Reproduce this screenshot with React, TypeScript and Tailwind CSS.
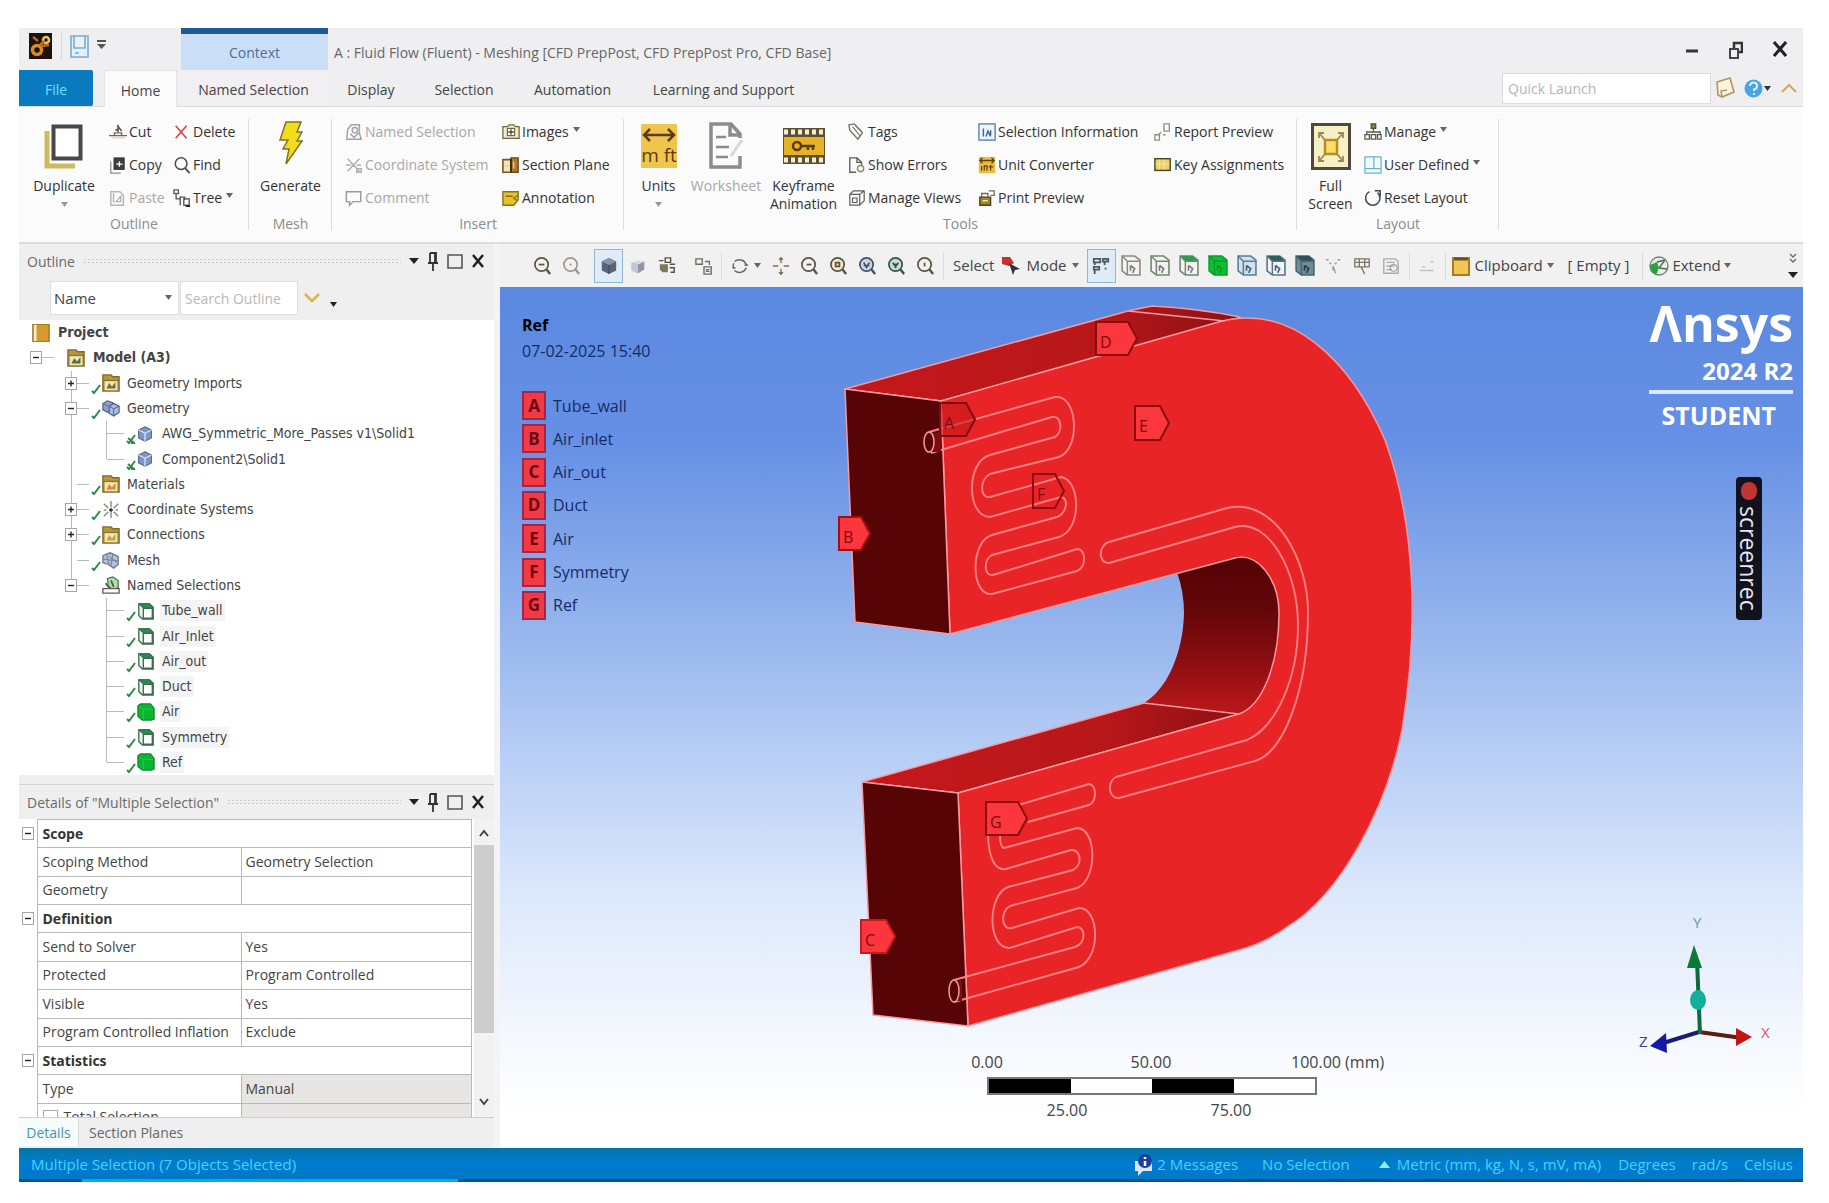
import React from "react";

type Kids = { children?: React.ReactNode };

function Ico({ size = 18, box = 20, children }: Kids & { size?: number; box?: number }) {
  return (
    <svg width={size} height={size} viewBox={`0 0 ${box} ${box}`} fill="none" className="shrink-0" aria-hidden="true">
      {children}
    </svg>
  );
}

/* ---------- ribbon icons ---------- */
const CutI = () => (
  <Ico>
    <path d="M0 14h20M6 14v-3h8v3" stroke="#6f6a5c" strokeWidth="1.6" />
    <path d="M10 2v8M10 4l4 5M7 8l3-1" stroke="#5d574b" strokeWidth="1.8" />
    <path d="M3 16.5h15" stroke="#d8cf9c" strokeWidth="1.2" />
  </Ico>
);
const CopyI = () => (
  <Ico>
    <path d="M2 6v13h11" stroke="#8f8f8f" strokeWidth="1.4" />
    <rect x="5" y="1.5" width="12.5" height="14" fill="#3c3c3c" />
    <path d="M8 9h7M11.500 6v6" stroke="#fff" strokeWidth="1.600" />
  </Ico>
);
const PasteI = () => (
  <Ico>
    <path d="M2 3h10l4 4v11H2z" stroke="#b5b5b5" strokeWidth="1.600" />
    <path d="M5 5v10M8 14l5-6v6z" stroke="#b5b5b5" strokeWidth="1.600" />
  </Ico>
);
const DeleteI = () => (
  <Ico>
    <path d="M3 3l12 14M15 3L3 17" stroke="#d6454a" strokeWidth="1.800" />
  </Ico>
);
const FindI = () => (
  <Ico>
    <circle cx="9" cy="8.500" r="6.500" stroke="#4b4b4b" strokeWidth="1.700" />
    <path d="M13.500 13.500l5 5.500" stroke="#4b4b4b" strokeWidth="2" />
  </Ico>
);
const TreeI = () => (
  <Ico>
    <rect x="1" y="1" width="5" height="4" stroke="#555" strokeWidth="1.400" />
    <path d="M3.500 5v6h4M8 8v10M8 9h5v3" stroke="#555" strokeWidth="1.500" />
    <rect x="12" y="11" width="6" height="7" stroke="#555" strokeWidth="1.500" />
    <path d="M14 19h5" stroke="#222" strokeWidth="2" />
  </Ico>
);
const NamedI = () => (
  <Ico>
    <path d="M3 7l4-5h9v9l2 7H2zM6 12l4 4 5-5" stroke="#a2a2a2" strokeWidth="1.600" />
    <circle cx="11" cy="8" r="3" stroke="#a2a2a2" strokeWidth="1.600" />
  </Ico>
);
const CoordI = () => (
  <Ico>
    <path d="M3 3l13 14M16 3L3 17M1 10h6M13 10h5M13 14h5v4h-5z" stroke="#b0b0b0" strokeWidth="1.600" />
  </Ico>
);
const CommentI = () => (
  <Ico>
    <path d="M1.500 3h16v11H9l-4 4v-4H1.500z" stroke="#9a9a9a" strokeWidth="1.600" />
  </Ico>
);
const ImagesI = () => (
  <Ico>
    <path d="M1 4h5l2-2h5l2 2h4v13H1z" fill="#f2ecc6" stroke="#6e6640" strokeWidth="1.400" />
    <rect x="6" y="6" width="8" height="8" fill="#fff" stroke="#6e6640" strokeWidth="1.300" />
    <path d="M10 7v6M7 10h6" stroke="#444" strokeWidth="1.500" />
  </Ico>
);
const SectionI = () => (
  <Ico>
    <path d="M1 4h9v14H1z" fill="#f6e3b8" stroke="#7a5a24" strokeWidth="1.800" />
    <path d="M10 2h8v16h-8z" fill="#a97b2c" stroke="#6b4f1e" strokeWidth="1.500" />
    <path d="M10 3v15" stroke="#3c2c10" strokeWidth="2" />
    <path d="M13 6v8M4 11h4" stroke="#e9cf8e" strokeWidth="1.500" />
  </Ico>
);
const AnnotI = () => (
  <Ico>
    <path d="M1 3h17v9l-5 6H1z" fill="#e6c22c" stroke="#8c7212" strokeWidth="1.500" />
    <path d="M4 8h8M18 7l-5 3 4 3" stroke="#8c7212" strokeWidth="1.500" />
  </Ico>
);
const TagsI = () => (
  <Ico>
    <path d="M1 2l6-1 9 10-5 7-9-10z" stroke="#75705f" strokeWidth="1.500" />
    <path d="M5 4l9 11M8 3l7 6" stroke="#75705f" strokeWidth="1.200" />
  </Ico>
);
const ErrorsI = () => (
  <Ico>
    <path d="M9 18H2V2h8l5 5v3M10 2v5h5" stroke="#5c5c5c" strokeWidth="1.500" />
    <circle cx="14" cy="14" r="3.500" stroke="#8a8a5c" strokeWidth="1.500" />
  </Ico>
);
const ViewsI = () => (
  <Ico>
    <path d="M2 6h11v12H2zM2 6l4-4h12v11l-5 5M13 6l5-4M5 10h5v5H5z" stroke="#5c5c5c" strokeWidth="1.300" />
  </Ico>
);
const SelInfoI = () => (
  <Ico>
    <rect x="1" y="1" width="18" height="18" fill="#eef4fa" stroke="#5c87b4" strokeWidth="1.600" />
    <path d="M6 6v9M9 15l2-6 3 6M14 8v6" stroke="#38659a" strokeWidth="1.600" />
  </Ico>
);
const UnitConvI = () => (
  <Ico>
    <rect x="1" y="1" width="18" height="18" fill="#eebb3c" />
    <path d="M2 5h16M5 2L2 5l3 3M15 2l3 3-3 3M4 16v-5M7 16v-5h3v5M14 16v-6M12 12h5" stroke="#5e430c" strokeWidth="1.400" />
  </Ico>
);
const PrintI = () => (
  <Ico>
    <path d="M2 9h12v9H2z" fill="#9c8430" stroke="#4e4116" strokeWidth="1.500" />
    <path d="M4 9V5h7v4M12 2h6v5h-4" stroke="#7a6d3c" strokeWidth="1.400" />
    <path d="M5 13h6" stroke="#f3e7b0" strokeWidth="1.600" />
  </Ico>
);
const ReportI = () => (
  <Ico>
    <path d="M11 1h6v8h-6zM1 13h5v6H1zM8 10l-3 3M10 13h3" stroke="#97907c" strokeWidth="1.500" />
  </Ico>
);
const KeyI = () => (
  <Ico>
    <rect x="1" y="3" width="17" height="13" fill="#ecd06a" stroke="#4e4423" strokeWidth="1.600" />
    <path d="M6 4v11M11 4v11M2 9h15" stroke="#f7e9ae" />
  </Ico>
);
const ManageI = () => (
  <Ico>
    <path d="M8 1h5v5H8z" fill="#6f8f3e" stroke="#4a4a3a" strokeWidth="1.400" />
    <path d="M10.500 6v4M3 13v-3h15v3M1 13h5v5H1zM8 13h5v5H8zM15 13h4v5h-4z" stroke="#5a564a" strokeWidth="1.400" />
  </Ico>
);
const UserDefI = () => (
  <Ico>
    <path d="M1 1h18v18H1zM1 14h18M11 1v13" fill="#eff8fc" stroke="#6fb2d0" strokeWidth="1.400" />
  </Ico>
);
const ResetI = () => (
  <Ico>
    <path d="M6 3a8 8 0 1 0 9 1M12 2h6v6" stroke="#4b4b4b" strokeWidth="1.700" />
  </Ico>
);

/* ---------- ribbon parts ---------- */
function Caret({ tone = "text-[#666]" }: { tone?: string }) {
  return (
    <svg width="7" height="5" viewBox="0 0 7 5" className={`shrink-0 ${tone}`} aria-hidden="true">
      <path d="M0 0h7L3.500 5z" fill="currentColor" />
    </svg>
  );
}

function Small({ icon, label, off, menu }: { icon: React.ReactNode; label: string; off?: boolean; menu?: boolean }) {
  return (
    <button disabled={off} className={`flex h-[33px] items-center gap-[2px] whitespace-nowrap ${off ? "text-[#a8a8a8]" : "text-[#333]"}`}>
      {icon}
      <span>{label}</span>
      {menu && <span className="mb-1 ml-[2px]"><Caret /></span>}
    </button>
  );
}

function Big({ icon, label, w, off, menu }: { icon: React.ReactNode; label: string[]; w: string; off?: boolean; menu?: boolean }) {
  return (
    <button disabled={off} className={`flex shrink-0 flex-col items-center ${w} ${off ? "text-[#a8a8a8]" : "text-[#333]"}`}>
      <span className="flex h-[62px] items-center">{icon}</span>
      {label.map((l) => (
        <span key={l} className="whitespace-nowrap leading-[18px]">{l}</span>
      ))}
      {menu && <span className="flex h-[18px] items-center"><Caret tone="text-[#999]" /></span>}
    </button>
  );
}

const Col = ({ w, children }: Kids & { w: string }) => <div className={`flex shrink-0 flex-col items-start ${w}`}>{children}</div>;

function Group({ label, pad = "", children }: Kids & { label: string; pad?: string }) {
  return (
    <section className="relative flex flex-col after:absolute after:bottom-3 after:right-0 after:top-3 after:w-px after:bg-[#dcdcdc]">
      <div className={`flex h-[109px] pt-[8px] ${pad}`}>{children}</div>
      <div className="text-center leading-[16px] text-[#8c8c8c]">{label}</div>
    </section>
  );
}

function Ribbon() {
  return (
    <div className="flex h-[137px] shrink-0 overflow-hidden border-b-2 border-[#dcdcdf] bg-[#fbfbfb]">
      <Group label="Outline">
        <Big w="w-[90px]" menu label={["Duplicate"]} icon={
          <svg width="40" height="46" viewBox="0 0 40 46" fill="none">
            <path d="M3 8v35h28" stroke="#cdbb5e" strokeWidth="5" />
            <rect x="9.500" y="3.500" width="27" height="32" fill="#fff" stroke="#4b4648" strokeWidth="4" />
          </svg>} />
        <Col w="w-[64px]">
          <Small icon={<CutI />} label="Cut" />
          <Small icon={<CopyI />} label="Copy" />
          <Small icon={<PasteI />} label="Paste" off />
        </Col>
        <Col w="w-[76px]">
          <Small icon={<DeleteI />} label="Delete" />
          <Small icon={<FindI />} label="Find" />
          <Small icon={<TreeI />} label="Tree" menu />
        </Col>
      </Group>
      <Group label="Mesh">
        <Big w="w-[83px]" label={["Generate"]} icon={
          <svg width="26" height="50" viewBox="0 0 26 50">
            <path d="M8 1h15l-4 10h5l-5 9h5L8 43l3-15H5l5-9H2z" fill="#f3dc1c" stroke="#7d7326" strokeWidth="1.500" />
          </svg>} />
      </Group>
      <Group label="Insert" pad="pl-[13px]">
        <Col w="w-[157px]">
          <Small icon={<NamedI />} label="Named Selection" off />
          <Small icon={<CoordI />} label="Coordinate System" off />
          <Small icon={<CommentI />} label="Comment" off />
        </Col>
        <Col w="w-[122px]">
          <Small icon={<ImagesI />} label="Images" menu />
          <Small icon={<SectionI />} label="Section Plane" />
          <Small icon={<AnnotI />} label="Annotation" />
        </Col>
      </Group>
      <Group label="Tools">
        <Big w="w-[69px]" menu label={["Units"]} icon={
          <svg width="36" height="44" viewBox="0 0 36 44">
            <rect width="36" height="44" rx="1" fill="#efc54c" />
            <path d="M3 11h30M9 5l-6 6 6 6M27 5l6 6-6 6" stroke="#5a3c12" strokeWidth="2.500" fill="none" />
            <text x="18" y="38" textAnchor="middle" fontSize="19" fill="#5a3c12">m ft</text>
          </svg>} />
        <Big w="w-[66px]" off label={["Worksheet"]} icon={
          <svg width="34" height="48" viewBox="0 0 34 48" fill="none">
            <path d="M31 34v11H2V2h20l9 10v4M21 3v10h10" stroke="#8c8c8c" strokeWidth="3.500" />
            <path d="M7 15h10M7 25h13M7 35h12" stroke="#8c8c8c" strokeWidth="2.500" />
            <path d="M33 18L22 34" stroke="#d8d8d8" strokeWidth="3" />
          </svg>} />
        <Big w="w-[89px]" label={["Keyframe", "Animation"]} icon={
          <svg width="42" height="36" viewBox="0 0 42 36">
            <rect width="42" height="36" fill="#5c5034" />
            <path d="M1 4h40M1 32h40" stroke="#f4eecb" strokeWidth="5" strokeDasharray="4 3" />
            <rect x="1" y="9" width="40" height="18" fill="#e7b325" />
            <circle cx="14" cy="18" r="4" fill="none" stroke="#5a3c12" strokeWidth="2.500" />
            <path d="M18 18h14M25 18v4M30 18v4" stroke="#5a3c12" strokeWidth="2.500" />
          </svg>} />
        <Col w="w-[130px]">
          <Small icon={<TagsI />} label="Tags" />
          <Small icon={<ErrorsI />} label="Show Errors" />
          <Small icon={<ViewsI />} label="Manage Views" />
        </Col>
        <Col w="w-[176px]">
          <Small icon={<SelInfoI />} label="Selection Information" />
          <Small icon={<UnitConvI />} label="Unit Converter" />
          <Small icon={<PrintI />} label="Print Preview" />
        </Col>
        <Col w="w-[143px]">
          <Small icon={<ReportI />} label="Report Preview" />
          <Small icon={<KeyI />} label="Key Assignments" />
        </Col>
      </Group>
      <Group label="Layout">
        <Big w="w-[67px]" label={["Full", "Screen"]} icon={
          <svg width="40" height="47" viewBox="0 0 40 47" fill="none">
            <rect x="1.500" y="1.500" width="37" height="44" fill="#f8efc4" stroke="#4c4a3c" strokeWidth="3" />
            <rect x="14" y="17" width="12" height="14" fill="#fbdf6a" stroke="#b48f1e" strokeWidth="2.500" />
            <path d="M14 17l-6-7M26 17l6-7M14 31l-6 7M26 31l6 7M8 15v-5h5M32 15v-5h-5M8 33v5h5M32 33v5h-5" stroke="#9a875a" strokeWidth="1.800" />
          </svg>} />
        <Col w="w-[135px]">
          <Small icon={<ManageI />} label="Manage" menu />
          <Small icon={<UserDefI />} label="User Defined" menu />
          <Small icon={<ResetI />} label="Reset Layout" />
        </Col>
      </Group>
    </div>
  );
}

function TitleBar() {
  return (
    <div className="flex h-[42px] shrink-0 items-start bg-[#efeff1]">
      <div className="flex w-[162px] items-center pl-[10px] pt-[4px]">
        <svg width="23" height="26" viewBox="0 0 23 26">
          <rect width="23" height="26" fill="#1d130c" />
          <circle cx="8" cy="17" r="4.500" fill="none" stroke="#d98b25" strokeWidth="3.500" />
          <circle cx="17" cy="7" r="3" fill="none" stroke="#f0c25a" strokeWidth="2.500" />
          <path d="M12 13l8-1M11 12l4-4M4 4l5 4" stroke="#b86a1b" strokeWidth="2.500" />
        </svg>
        <span className="ml-[9px] h-[28px] w-px bg-[#dadadc]" />
        <button aria-label="Save" className="ml-[8px]">
          <svg width="19" height="23" viewBox="0 0 19 23" fill="none">
            <path d="M1 1h17v21H1zM4 1v12h11V1" fill="#e4f1fa" stroke="#79acd6" strokeWidth="1.600" />
            <path d="M5 18h4" stroke="#79acd6" strokeWidth="1.600" />
          </svg>
        </button>
        <button aria-label="Customize toolbar" className="mb-1 ml-[8px]">
          <svg width="9" height="9" viewBox="0 0 9 9"><path d="M0 0h9v2H0zM0 4h9L4.500 9z" fill="#555" /></svg>
        </button>
      </div>
      <div className="flex h-[42px] w-[147px] items-center justify-center border-t-[6px] border-[#1d5a96] bg-[#cbdef7] text-[#47709f]">Context</div>
      <h1 className="whitespace-nowrap pl-[6px] text-[14px] leading-[50px] text-[#666]">
        A : Fluid Flow (Fluent) - Meshing [CFD PrepPost, CFD PrepPost Pro, CFD Base]
      </h1>
      <div className="ml-auto flex h-[44px] items-center gap-[30px] pr-[16px]">
        <button aria-label="Minimize"><svg width="14" height="14"><path d="M1 8h12" stroke="#333" strokeWidth="3" /></svg></button>
        <button aria-label="Restore"><svg width="14" height="18" fill="none"><path d="M5 7V2h8v9h-3" stroke="#333" strokeWidth="2.500" /><rect x="1" y="8" width="8" height="9" stroke="#333" strokeWidth="1.800" /></svg></button>
        <button aria-label="Close"><svg width="14" height="20"><path d="M1 2l12 14M13 2L1 16" stroke="#222" strokeWidth="3" /></svg></button>
      </div>
    </div>
  );
}

function TabBar() {
  return (
    <nav className="flex h-[37px] shrink-0 border-b border-[#dcdcdf] bg-[#efeff1] text-[#444] [&>button]:pt-[3px]">
      <button className="w-[74px] rounded-r-[2px] bg-[#0a7abf] text-[#6fe0ff]">File</button>
      <button className="-mb-px ml-[11px] w-[73px] border-x border-t border-[#e2e2e4] bg-[#fbfbfb]">Home</button>
      <button className="ml-[2px] w-[149px] bg-[#f1eff2]">Named Selection</button>
      <button className="w-[86px]">Display</button>
      <button className="w-[100px]">Selection</button>
      <button className="w-[117px]">Automation</button>
      <button className="w-[185px]">Learning and Support</button>
      <div className="ml-auto flex items-center pr-[6px]">
        <input aria-label="Quick Launch" placeholder="Quick Launch" className="h-[31px] w-[209px] border border-[#dcdcdc] bg-white px-[5px] placeholder:text-[#b4b4b4]" />
        <button aria-label="Notes" className="ml-[5px]">
          <svg width="19" height="22" viewBox="0 0 19 22"><path d="M1 5l13-4 4 14-12 5-4-2z" fill="#fbf4e2" stroke="#b59263" strokeWidth="1.600" /><path d="M6 20l-1-6 6-1" fill="none" stroke="#b59263" strokeWidth="1.500" /></svg>
        </button>
        <button aria-label="Help" className="ml-[9px] flex items-center gap-px">
          <svg width="19" height="21" viewBox="0 0 19 21"><circle cx="9.500" cy="10.500" r="9" fill="#4aa3e4" /><path d="M6 8a3.500 3.500 0 1 1 4 3.500V13M10 15v2" fill="none" stroke="#d9efff" strokeWidth="2" /></svg>
          <Caret tone="text-[#333]" />
        </button>
        <button aria-label="Collapse ribbon" className="ml-[10px]">
          <svg width="16" height="12" viewBox="0 0 16 12"><path d="M1 10l7-7 7 7" fill="none" stroke="#d9a860" strokeWidth="2" /></svg>
        </button>
      </div>
    </nav>
  );
}

/* ---------- docked panels ---------- */
function PanelTitle({ text }: { text: string }) {
  return (
    <div className="flex h-[34px] shrink-0 items-center bg-[#efeff0] pl-[8px] pr-[9px] text-[#6a6a6a]">
      <h2 className="whitespace-nowrap">{text}</h2>
      <span className="mx-[8px] h-[6px] flex-1 bg-[radial-gradient(#c9c9c9_1px,transparent_1px)] bg-[size:4px_3px]" />
      <div className="flex items-center gap-[9px]">
        <button aria-label="Panel menu"><svg width="10" height="6"><path d="M0 0h10L5 6z" fill="#222" /></svg></button>
        <button aria-label="Pin"><svg width="10" height="19" fill="none"><path d="M2 1h6v10M2 1v10M0 11h10M5 11v8M7 2v8" stroke="#333" strokeWidth="1.800" /></svg></button>
        <button aria-label="Maximize"><svg width="16" height="17" fill="none"><path d="M1 2h14v13H1z" stroke="#555" strokeWidth="1.600" /></svg></button>
        <button aria-label="Close panel"><svg width="13" height="14"><path d="M1 1l10 12M11 1L1 13" stroke="#222" strokeWidth="2.500" /></svg></button>
      </div>
    </div>
  );
}

const FolderI = ({ tint }: { tint: string }) => (
  <Ico>
    <path d="M1 1h9l2 2h7v16H1z" fill="#b8963c" stroke="#7d6b2e" strokeWidth="1.500" />
    <path d="M3 8h14v10H3z" fill="#efe6bb" />
    <path d="M5 16l3-6 3 4 4-5v7z" fill={tint} />
    <path d="M2 7h17" stroke="#7d6b2e" />
  </Ico>
);
const CubeI = () => (
  <Ico size={16}>
    <path d="M10 1l8 4v10l-8 4-8-4V5z" fill="#7e97c4" stroke="#51628a" strokeWidth="1.300" />
    <path d="M2 5l8 4 8-4M10 9v10" stroke="#dfe8f8" strokeWidth="1.500" />
  </Ico>
);
const GeomI = () => (
  <Ico>
    <path d="M1 5l5-3 6 2v8l-5 3-6-3z" fill="#8ea2cc" stroke="#51628a" strokeWidth="1.300" />
    <path d="M8 8l5-3 6 3v7l-6 4-5-3z" fill="#a9bbdf" stroke="#51628a" strokeWidth="1.300" />
    <path d="M1 5l6 3M8 8l5 3 6-3M13 11v8" stroke="#51628a" />
  </Ico>
);
const MeshI = () => (
  <Ico>
    <path d="M1 5l8-3 9 4v9l-5 4-6-4-6-2z" fill="#b4bed4" stroke="#6e7896" strokeWidth="1.400" />
    <path d="M1 9l8 1 9 1M5 3l3 12M12 3l-2 14M8 6l9 7" stroke="#6e7896" />
  </Ico>
);
const AxesI = () => (
  <Ico>
    <path d="M10 0v7M10 12v7M2 3l5 5M18 3l-5 5M2 17l5-5M18 17l-5-5" stroke="#7c8c7c" strokeWidth="1.500" />
    <path d="M10 8v4M8 10h4" stroke="#333" strokeWidth="2" />
    <path d="M2 10h3M15 10h3" stroke="#b98b52" strokeWidth="1.500" />
  </Ico>
);
const NsI = () => (
  <Ico>
    <path d="M6 3l6-2 6 4v8l-6 2-5-4z" fill="#b9d8b4" stroke="#3f7d44" strokeWidth="1.400" />
    <path d="M4 8l4 5M10 5l3 7" stroke="#2e6b34" strokeWidth="2" />
    <path d="M1 14h18v5H1z" fill="#fff" stroke="#6b5656" strokeWidth="1.500" />
  </Ico>
);
const FaceI = () => (
  <Ico>
    <path d="M2 2h12l4 4v13H6l-4-4z" fill="#e9f5ec" stroke="#3d6b4f" strokeWidth="1.500" />
    <path d="M2 2h12l4 4H6z" fill="#2f8a55" stroke="#2b6b45" />
    <path d="M7 7h10v11H7z" fill="#fff" stroke="#3d6b4f" strokeWidth="1.500" />
  </Ico>
);
const BodyI = () => (
  <Ico>
    <path d="M1 3l3-2h11l4 5v12l-3 1H6l-5-4z" fill="#0cb52f" stroke="#08892a" strokeWidth="1.300" />
    <path d="M2 4l5 3h11M7 7v11" stroke="#25d04a" />
  </Ico>
);
const ProjectI = () => (
  <Ico>
    <path d="M1 0h18v20H1z" fill="#d39b2b" stroke="#9b701c" strokeWidth="1.500" />
    <path d="M2 1h3v18H2z" fill="#f5ecc9" />
  </Ico>
);

type Row = { d: 0 | 1 | 2 | 3; t: string; i: React.ReactNode; box?: "+" | "-"; x?: boolean; last?: boolean };
const rows: Row[] = [
  { d: 0, t: "Project", i: <ProjectI /> },
  { d: 1, t: "Model (A3)", i: <FolderI tint="#5f6f3c" />, box: "-" },
  { d: 2, t: "Geometry Imports", i: <FolderI tint="#7a6a3a" />, box: "+" },
  { d: 2, t: "Geometry", i: <GeomI />, box: "-" },
  { d: 3, t: "AWG_Symmetric_More_Passes v1\\Solid1", i: <CubeI />, x: true },
  { d: 3, t: "Component2\\Solid1", i: <CubeI />, x: true, last: true },
  { d: 2, t: "Materials", i: <FolderI tint="#e0852c" /> },
  { d: 2, t: "Coordinate Systems", i: <AxesI />, box: "+" },
  { d: 2, t: "Connections", i: <FolderI tint="#c2a53a" />, box: "+" },
  { d: 2, t: "Mesh", i: <MeshI /> },
  { d: 2, t: "Named Selections", i: <NsI />, box: "-", last: true },
  { d: 3, t: "Tube_wall", i: <FaceI /> },
  { d: 3, t: "AIr_Inlet", i: <FaceI /> },
  { d: 3, t: "Air_out", i: <FaceI /> },
  { d: 3, t: "Duct", i: <FaceI /> },
  { d: 3, t: "Air", i: <BodyI /> },
  { d: 3, t: "Symmetry", i: <FaceI /> },
  { d: 3, t: "Ref", i: <BodyI />, last: true },
];

function Expander({ sign }: { sign: "+" | "-" }) {
  return (
    <svg width="12" height="13" viewBox="0 0 12 13" className="shrink-0 bg-white" aria-hidden="true">
      <rect x="0.500" y="0.500" width="11" height="12" fill="#fff" stroke="#a5a5a5" />
      <path d={sign === "+" ? "M3 6.500h6M6 3.500v6" : "M3 6.500h6"} stroke="#222" strokeWidth="1.400" />
    </svg>
  );
}
const Check = ({ x }: { x?: boolean }) => (
  <svg width="12" height="12" viewBox="0 0 12 12" className="mt-[11px] shrink-0" fill="none" aria-hidden="true">
    <path d="M2 8l2 2 6-8" stroke="#2c8a46" strokeWidth="2" />
    {x && <path d="M3 5l6 5M6 10h4" stroke="#2c8a46" strokeWidth="2" />}
  </svg>
);
const Rail = ({ end, hide }: { end?: boolean; hide?: boolean }) => (
  <span className="flex w-px shrink-0 flex-col self-stretch">
    {!hide && <span className={`w-px bg-[#b9b9b9] ${end ? "h-1/2" : "h-full"}`} />}
  </span>
);

function TreeRow({ r, inNs }: { r: Row; inNs: boolean }) {
  return (
    <li className="flex min-h-0 flex-1 items-center whitespace-nowrap">
      {r.d === 0 && <span className="ml-[13px] flex items-center gap-[8px]">{r.i}<b>{r.t}</b></span>}
      {r.d === 1 && (
        <span className="ml-[11px] flex items-center">
          <Expander sign="-" />
          <span className="mr-[13px] h-px w-[12px] bg-[#b9b9b9]" />
          {r.i}<b className="ml-[8px]">{r.t}</b>
        </span>
      )}
      {r.d === 2 && (
        <>
          <span className="w-[52px] shrink-0" />
          <Rail end={r.last} />
          {r.box ? <span className="-ml-[7px] flex"><Expander sign={r.box} /></span> : <span className="w-[5px]" />}
          <span className="h-px w-[12px] bg-[#b9b9b9]" />
          <span className="w-[1px]" />
          {r.t === "Named Selections" ? <span className="w-[12px]" /> : <Check />}
          <span className="flex">{r.i}</span>
          <span className="ml-[7px]">{r.t}</span>
        </>
      )}
      {r.d === 3 && (
        <>
          <span className="w-[52px] shrink-0" />
          <Rail hide={inNs} />
          <span className="w-[34px] shrink-0" />
          <Rail end={r.last} />
          <span className="mr-px h-px w-[17px] bg-[#b9b9b9]" />
          <Check x={r.x} />
          <span className="flex w-[18px]">{r.i}</span>
          <span className={`ml-[5px] px-[2px] ${inNs ? "bg-[#f4f4f4]" : ""}`}>{r.t}</span>
        </>
      )}
    </li>
  );
}

function OutlinePanel() {
  return (
    <section className="flex shrink-0 flex-col">
      <PanelTitle text="Outline" />
      <div className="flex h-[42px] items-start bg-[#efeff0] pl-[31px] pt-[3px]">
        <label className="relative flex">
          <select aria-label="Filter by" className="h-[34px] w-[129px] appearance-none border border-[#dedede] bg-white px-[3px] text-[15px] text-[#444]">
            <option>Name</option>
          </select>
          <span className="pointer-events-none absolute right-[7px] top-[14px] flex"><Caret /></span>
        </label>
        <input aria-label="Search Outline" placeholder="Search Outline" className="ml-px h-[34px] w-[118px] border border-[#dedede] bg-white px-[4px] placeholder:text-[#b8b8b8]" />
        <button aria-label="Expand" className="ml-[6px] mt-[12px]"><svg width="16" height="12"><path d="M1 1l7 7 7-7" fill="none" stroke="#d9b54a" strokeWidth="2.500" /></svg></button>
        <button aria-label="More" className="ml-[10px] mt-[21px]"><Caret tone="text-[#222]" /></button>
      </div>
      <ul className="flex h-[455px] flex-col bg-white font-[DejaVu_Sans_Condensed,Noto_Sans,sans-serif] text-[14px] text-[#444]">
        {rows.map((r, n) => <TreeRow key={r.t} r={r} inNs={n > 10} />)}
      </ul>
    </section>
  );
}

const details: { k: string; v?: string; head?: boolean; dim?: boolean; check?: boolean }[] = [
  { k: "Scope", head: true },
  { k: "Scoping Method", v: "Geometry Selection" },
  { k: "Geometry", v: "" },
  { k: "Definition", head: true },
  { k: "Send to Solver", v: "Yes" },
  { k: "Protected", v: "Program Controlled" },
  { k: "Visible", v: "Yes" },
  { k: "Program Controlled Inflation", v: "Exclude" },
  { k: "Statistics", head: true },
  { k: "Type", v: "Manual", dim: true },
  { k: "Total Selection", v: "", dim: true, check: true },
];

function DetailsPanel() {
  return (
    <section className="flex min-h-0 flex-1 flex-col border-t border-[#d4d4d4]">
      <PanelTitle text={'Details of "Multiple Selection"'} />
      <div className="flex min-h-0 flex-1 overflow-hidden border-b border-[#cfcfcf] bg-white">
        <div className="min-w-0 flex-1">
          <table className="h-[313px] w-full table-fixed border-collapse text-[#444]">
            <colgroup><col className="w-[18px]" /><col className="w-[204px]" /><col /></colgroup>
            <tbody>
              {details.map((d) => (
                <tr key={d.k}>
                  <td className="p-0 leading-[20px]">{d.head && <span className="flex justify-center pl-px"><Expander sign="-" /></span>}</td>
                  {d.head ? (
                    <th colSpan={2} className="border border-[#b9b9b9] px-[5px] py-0 text-left font-bold leading-[20px] text-[#333]">{d.k}</th>
                  ) : (
                    <>
                      <td className="whitespace-nowrap border border-[#b9b9b9] px-[5px] py-0 leading-[20px]">
                        {d.check ? (
                          <label className="flex items-center gap-[6px]">
                            <input type="checkbox" className="size-[15px] appearance-none border border-[#aaa] bg-white" />
                            {d.k}
                          </label>
                        ) : d.k}
                      </td>
                      <td className={`border border-[#b9b9b9] px-[4px] py-0 leading-[20px] ${d.dim ? "bg-[#e7e6e5]" : ""}`}>{d.v}</td>
                    </>
                  )}
                </tr>
              ))}
            </tbody>
          </table>
        </div>
        <div className="ml-[2px] flex w-[20px] flex-col items-center bg-[#f2f2f2]">
          <svg width="10" height="26"><path d="M1 17l4-5 4 5" fill="none" stroke="#444" strokeWidth="2" /></svg>
          <div className="h-[188px] w-full bg-[#cdcdcd]" />
          <svg width="10" height="26" className="mb-[3px] mt-auto"><path d="M1 11l4 5 4-5" fill="none" stroke="#444" strokeWidth="2" /></svg>
        </div>
      </div>
      <div className="flex h-[30px] shrink-0 bg-[#efeff0] pb-[2px] text-[#666]">
        <button className="w-[60px] border-r border-[#dadada] bg-[#f6fbfc] text-[#4793aa]">Details</button>
        <button className="px-[10px]">Section Planes</button>
      </div>
    </section>
  );
}

/* ---------- graphics toolbar ---------- */
const Tool = ({ on, label, children }: Kids & { on?: boolean; label: string }) => (
  <button aria-label={label} className={`flex h-[34px] w-[29px] shrink-0 items-center justify-center ${on ? "border border-[#8fb7d4] bg-[#dfecf5]" : ""}`}>
    {children}
  </button>
);
const Lens = ({ c = "#5a5340", dot, fill = "none" }: { c?: string; dot?: string; fill?: string }) => (
  <Ico size={19}>
    <circle cx="9" cy="9" r="7" stroke={c} strokeWidth="1.800" fill={fill} />
    <path d="M14 14l4 5" stroke={c} strokeWidth="2.500" />
    {dot && <path d={dot} stroke={c} strokeWidth="1.800" />}
  </Ico>
);
const Sel = ({ line, top, fill, mark = "#777" }: { line: string; top?: string; fill?: string; mark?: string }) => (
  <Ico size={21}>
    <path d="M2 1h12l5 4v14H7l-5-4z" fill={fill ?? "#f3f3f3"} stroke={line} strokeWidth="1.500" />
    {top && <path d="M2 1h12l5 5H7z" fill={top} />}
    <path d="M2 1l5 5h12M7 6v13" stroke={line} strokeWidth="1.400" />
    <path d="M10 10l4 3-2 4M10 10v5" stroke={mark} strokeWidth="1.500" />
  </Ico>
);
const Sep = () => <span className="mx-[3px] h-[28px] w-px shrink-0 bg-[#dcdcdc]" />;

function GraphicsToolbar() {
  return (
    <div className="flex h-[43px] shrink-0 items-center overflow-hidden bg-[#f1f1f2] pl-[28px] text-[15px] text-[#444]">
      <Tool label="Zoom in"><Lens c="#5a5340" dot="M6 9h6" /></Tool>
      <Tool label="Zoom out"><Lens c="#9c988c" dot="M8 9h2" /></Tool>
      <span className="w-[8px] shrink-0" />
      <Tool on label="Shaded">
        <Ico><path d="M10 1l8 4v10l-8 4-8-4V5z" fill="#59637a" /><path d="M2 5l8 4 8-4-8-4z" fill="#8a93a8" /><path d="M10 9v10" stroke="#394258" /></Ico>
      </Tool>
      <Tool label="Solid"><Ico><path d="M3 6l7 2 7-3v9l-7 4-7-3z" fill="#8f97a6" /><path d="M3 6l7-2 7 1-7 3z" fill="#d5d9e0" /><path d="M3 6l7 2v10l-7-3z" fill="#c2c7d1" /></Ico></Tool>
      <Tool label="Appearance">
        <Ico><path d="M2 8h9v9H5l-3-3z" fill="#7d765f" /><path d="M8 1h6v5H8zM13 8h6M13 12h5v5h-4M1 4h5" stroke="#575243" strokeWidth="1.600" /></Ico>
      </Tool>
      <span className="w-[8px] shrink-0" />
      <Tool label="Rescale">
        <Ico><path d="M1 2h7v6H1zM10 11h8v8h-8z" stroke="#6e6a5c" strokeWidth="1.500" /><path d="M11 5h5v4M12 14h4M12 16h4" stroke="#6e6a5c" strokeWidth="1.500" /></Ico>
      </Tool>
      <Sep />
      <Tool label="Rotate"><Ico><path d="M4 5a8 8 0 0 1 13 4M17 12a8 8 0 0 1-13 3M3 13a8 8 0 0 1 0-6" stroke="#6a6a6a" strokeWidth="1.700" /><path d="M15 9h4M2 12h3" stroke="#555" strokeWidth="1.500" /></Ico></Tool>
      <span className="mr-[5px] flex"><Caret /></span>
      <Tool label="Pan"><Ico><path d="M10 1v6M10 13v6M1 10h6M13 10h6" stroke="#a2906a" strokeWidth="2" /><path d="M8 3l2-2 2 2M8 17l2 2 2-2" stroke="#6b5f43" strokeWidth="1.500" /></Ico></Tool>
      <Tool label="Zoom"><Lens dot="M7 9h5" /></Tool>
      <Tool label="Box zoom"><Lens fill="#f4e5c8" dot="M7 7h4v4H7z" /></Tool>
      <Tool label="Fit"><Lens c="#47505e" fill="#c9d5e8" dot="M6 7l3 5 3-5M6 10h6" /></Tool>
      <Tool label="Toggle magnifier"><Lens c="#38524a" fill="#c3dfd4" dot="M6 7l3 4 3-4M9 8v5" /></Tool>
      <Tool label="Previous view"><Lens dot="M9 7v4" /></Tool>
      <Sep />
      <span className="pl-[6px]">Select</span>
      <button className="ml-[7px] flex items-center gap-[5px]">
        <Ico size={20}><path d="M1 1h8l4 6-5 3-7-2z" fill="#c4302b" /><path d="M8 7l4 12 2-5 5-1z" fill="#333" /></Ico>
        Mode <Caret />
      </button>
      <span className="w-[8px]" />
      <Tool on label="Smart select"><Ico><path d="M2 2h7v4H2zM12 2h6v3h-6zM2 11h6v3H2zM3 14v5M14 5v4M14 13h2M3 6v3" stroke="#4c5a62" strokeWidth="2" /></Ico></Tool>
      <Tool label="Vertex"><Sel line="#8a8a84" /></Tool>
      <Tool label="Edge"><Sel line="#6f8a6a" /></Tool>
      <Tool label="Face"><Sel line="#6a8a70" top="#2f9a50" /></Tool>
      <Tool label="Body"><Sel line="#0a9a2c" fill="#0fbf33" mark="#0a9a2c" /></Tool>
      <Tool label="Node"><Sel line="#5c7c94" fill="#cfe2ee" mark="#39617c" /></Tool>
      <Tool label="Element face"><Sel line="#56758c" top="#2f5f5c" mark="#39617c" /></Tool>
      <Tool label="Element"><Sel line="#4b6472" top="#2f4f5c" fill="#6c8c98" mark="#233c48" /></Tool>
      <Tool label="Extend to vertex"><Ico><path d="M2 3h3M15 3h3M6 6l2 2M14 6l-2 2M10 10l3 8M10 10v5" stroke="#a59a8c" strokeWidth="1.500" /></Ico></Tool>
      <Tool label="Label"><Ico><path d="M2 2h16v9H2zM7 2v9M13 2v9M2 6h16M9 11l4 8" stroke="#7c7764" strokeWidth="1.500" /></Ico></Tool>
      <Tool label="Chart"><Ico><path d="M2 2h13l3 3v13H2zM5 6h9M5 10h9M5 14h6" stroke="#a9a9b0" strokeWidth="1.500" /><circle cx="13" cy="12" r="4" stroke="#8f8f9a" /></Ico></Tool>
      <Sep />
      <Tool label="Layer"><Ico><path d="M2 15h15M4 11h4M14 6l3-1" stroke="#c9bcc4" strokeWidth="1.600" /></Ico></Tool>
      <Sep />
      <button className="ml-[2px] flex items-center gap-[4px]">
        <Ico size={20}><path d="M2 2h16v17H2z" fill="#f0c654" stroke="#a97c22" strokeWidth="2" /><path d="M3 3h14" stroke="#6b4f2a" strokeWidth="3" /></Ico>
        Clipboard <Caret />
      </button>
      <span className="ml-[14px] mr-[10px] whitespace-nowrap">[ Empty ]</span>
      <Sep />
      <button className="ml-[3px] flex items-center gap-[3px]">
        <Ico size={20}><circle cx="10" cy="10" r="9" fill="#e6efe6" stroke="#6b8470" strokeWidth="1.300" /><path d="M1 9l7-3 2 6-3 7a9 9 0 0 1-6-10z" fill="#2da043" /><path d="M8 6l8-2M10 12l8 1M16 4l-6 8" stroke="#56685a" strokeWidth="1.300" /></Ico>
        Extend <Caret />
      </button>
      <button aria-label="Toolbar options" className="ml-auto mr-[5px]">
        <svg width="10" height="26"><path d="M2 1l3 3 3-3M2 6l3 3 3-3" fill="none" stroke="#666" strokeWidth="1.300" /><path d="M0 19h10l-5 6z" fill="#222" /></svg>
      </button>
    </div>
  );
}

/* ---------- 3D scene ---------- */
const flags: { l: string; x: number; y: number; w: number; h: number; fill: string; line: string }[] = [
  { l: "A", x: 940, y: 403, w: 35, h: 33, fill: "#c8191c99", line: "#7d0c0e" },
  { l: "B", x: 839, y: 517, w: 31, h: 33, fill: "#fb363c", line: "#a01013" },
  { l: "C", x: 861, y: 920, w: 34, h: 33, fill: "#fb363c", line: "#c8191c" },
  { l: "D", x: 1096, y: 322, w: 41, h: 33, fill: "#fb363c", line: "#8c0d10" },
  { l: "E", x: 1135, y: 406, w: 34, h: 34, fill: "#fb363c", line: "#8c0d10" },
  { l: "F", x: 1033, y: 474, w: 31, h: 34, fill: "none", line: "#8c0d10" },
  { l: "G", x: 986, y: 802, w: 41, h: 33, fill: "#fb363c", line: "#8c0d10" },
];

function Scene() {
  return (
    <svg viewBox="500 287 940 740" width="940" height="740" className="absolute left-0 top-0" role="img" aria-label="Bent duct with serpentine tube">
      <defs>
        <linearGradient id="bore" x1="0" y1="0" x2="0" y2="1">
          <stop offset="0" stopColor="#520306" /><stop offset="0.350" stopColor="#620609" /><stop offset="0.750" stopColor="#961014" /><stop offset="1" stopColor="#bd181b" />
        </linearGradient>
        <linearGradient id="lid" x1="0" y1="0" x2="1" y2="0">
          <stop offset="0" stopColor="#c4181b" /><stop offset="0.650" stopColor="#b8171a" /><stop offset="1" stopColor="#8c1013" />
        </linearGradient>
      </defs>
      <g stroke="#f59aa0" strokeWidth="1.500" strokeLinejoin="round">
        <path d="M845 389L1128 311L1152 306Q1195 308 1240 317L1231 321L941 401Z" fill="url(#lid)" />
        <path d="M1177 572Q1184 592 1184 613C1183 655 1166 690 1144 703L1239 715L1300 690V550H1235Z" fill="url(#bore)" stroke="none" />
        <path d="M862 782L1144 703L1239 714L958 793Z" fill="url(#lid)" />
        <path d="M941 401L1215 323C1290 300 1350 360 1385 440C1414 520 1420 620 1402 730C1386 810 1340 895 1287 927Q1265 943 1239 950L968 1026L958 793L1239 714C1262 706 1279 665 1279 613C1279 580 1258 552 1235 558L950 634Z" fill="#e92427" />
        <path d="M845 389L941 401L950 634L855 622Z" fill="#560406" />
        <path d="M862 782L958 793L968 1026L873 1015Z" fill="#560406" />
        <path d="M1128 311L1225 321" />
      </g>
      <g fill="none" stroke="#ff8084" strokeWidth="1.900">
        <path d="M929 432L1055 397C1078 394 1081 449 1059 457L990 474C979 480 980 499 990 497L1061 477C1081 480 1082 530 1059 537L992 555C983 560 984 577 993 575L1077 549C1086 549 1087 566 1077 571L992 594C970 596 970 541 992 535L1057 517C1067 513 1069 498 1061 497L990 517C966 517 966 461 990 455L1055 437C1063 432 1062 415 1052 417L931 453" />
        <path d="M1109 542L1227 508C1275 497 1308 560 1308 612C1308 690 1284 752 1255 761L1119 798C1108 799 1107 781 1116 777L1247 740C1275 728 1298 680 1298 625C1298 570 1268 518 1235 527L1109 563C1098 564 1098 545 1109 542Z" />
        <path d="M1015 806L1089 784C1097 785 1097 801 1089 805L1028 822M1000 835Q1000 847 1004 848L1077 828C1097 828 1098 880 1077 888L1010 906C1000 911 1001 931 1012 928L1079 908C1100 908 1101 958 1079 967L954 1002" />
        <path d="M988 836C989 860 996 871 1006 869L1071 850C1081 849 1083 865 1073 870L1008 887C987 895 987 949 1010 948L1077 927C1085 927 1087 942 1075 947L954 980" />
      </g>
      <rect x="930" y="433" width="11" height="19" fill="#7d0c0f" />
      <rect x="953" y="981" width="9" height="20" fill="#7d0c0f" />
      <g fill="#560406" stroke="#f59aa0" strokeWidth="1.500">
        <ellipse cx="929" cy="442" rx="5" ry="10" />
        <ellipse cx="954" cy="991" rx="5" ry="11" />
      </g>
      {flags.map((f) => (
        <g key={f.l}>
          <path d={`M${f.x} ${f.y}H${f.x + f.w - 9}L${f.x + f.w} ${f.y + f.h / 2}L${f.x + f.w - 9} ${f.y + f.h}H${f.x}Z`} fill={f.fill} stroke={f.line} strokeWidth="2" />
          <text x={f.x + 4} y={f.y + 26} fontSize="16" fill="#7d0b0e">{f.l}</text>
        </g>
      ))}
    </svg>
  );
}

const legend = [["A", "Tube_wall"], ["B", "Air_inlet"], ["C", "Air_out"], ["D", "Duct"], ["E", "Air"], ["F", "Symmetry"], ["G", "Ref"]];

function Viewport() {
  return (
    <div className="relative min-h-0 flex-1 overflow-hidden bg-[linear-gradient(180deg,#5b89e0_0%,#6690e5_18%,#9bb9ee_42%,#b9cff6_55%,#dbe7fb_70%,#f3f7fe_86%,#ffffff_96%)]">
      <Scene />
      <div className="relative w-[180px] pl-[22px] pt-[25px] text-[16px] leading-[26px] text-[#132c66]">
        <p className="font-bold text-black">Ref</p>
        <p className="whitespace-nowrap">07-02-2025 15:40</p>
        <ul className="mt-[25px] flex h-[233px] flex-col">
          {legend.map(([a, b]) => (
            <li key={a} className="flex flex-1 items-center gap-[7px]">
              <span className="flex h-[29px] w-[24px] items-center justify-center border-2 border-[#a3264a] bg-[#f33a44] text-[17px] font-bold text-[#6d0713]">{a}</span>
              {b}
            </li>
          ))}
        </ul>
      </div>
      <div className="absolute right-[10px] top-[4px] w-[144px] text-right font-bold text-white">
        <p className="flex h-[64px] items-center justify-end text-[50px] leading-[64px]">Λnsys</p>
        <p className="text-[24px] leading-[32px]">2024 R2</p>
        <div className="mt-[3px] h-[4px] bg-[#dce9ff]" />
        <p className="pr-[17px] pt-[4px] text-[25px] leading-[34px]">STUDENT</p>
      </div>
      <div className="absolute right-[41px] top-[190px] flex h-[143px] w-[26px] flex-col items-center gap-[6px] rounded-[4px] bg-[#10121e] pt-[5px]">
        <span className="h-[18px] w-[16px] shrink-0 rounded-full bg-[#c03434]" />
        <span className="text-[23px] leading-[24px] text-[#e8e8ee] [writing-mode:vertical-rl]">screenrec</span>
      </div>
      <div className="absolute bottom-[28px] left-[446px] w-[450px] text-[16px] leading-[20px] text-[#444]">
        <div className="flex">
          <span className="w-[82px] text-center">0.00</span>
          <span className="w-[82px]" />
          <span className="w-[82px] text-center">50.00</span>
          <span className="w-[99px]" />
          <span className="whitespace-nowrap">100.00 (mm)</span>
        </div>
        <div className="ml-[41px] mt-[5px] flex h-[18px] w-[330px] border-2 border-[#777] bg-white">
          <span className="w-1/4 bg-black" /><span className="w-1/4" /><span className="w-1/4 bg-black" />
        </div>
        <div className="mt-[5px] flex pl-[80px]">
          <span className="w-[82px] text-center">25.00</span>
          <span className="w-[82px]" />
          <span className="w-[82px] text-center">75.00</span>
        </div>
      </div>
      <svg viewBox="1635 910 145 150" width="145" height="150" className="absolute bottom-[88px] right-[23px]" role="img" aria-label="Axis triad">
        <path d="M1699 1032L1742 1038" stroke="#5c1c10" strokeWidth="4" />
        <path d="M1736 1028L1752 1037L1736 1046Z" fill="#c41414" />
        <path d="M1699 1032L1660 1044" stroke="#1c1c6e" strokeWidth="4" />
        <path d="M1666 1033L1650 1046L1667 1053Z" fill="#1616a8" />
        <path d="M1700 1034L1697 960" stroke="#0c6b3c" strokeWidth="4" />
        <path d="M1694 945L1702 968H1687Z" fill="#0a7a34" />
        <ellipse cx="1698" cy="1000" rx="8" ry="10" fill="#10b09c" />
        <g fontSize="15"><text x="1693" y="928" fill="#5ea090">Y</text><text x="1761" y="1038" fill="#e0505c">X</text><text x="1639" y="1047" fill="#3c3ca0">Z</text></g>
      </svg>
    </div>
  );
}

function StatusBar() {
  return (
    <footer className="relative flex h-[34px] shrink-0 items-center whitespace-nowrap border-b-[3px] border-[#00559f] bg-[linear-gradient(180deg,#0773a4,#007ccf_45%,#0078c8)] pl-[12px] pr-[10px] pt-[2px] text-[15px] text-[#45d4fa]">
      <span>Multiple Selection (7 Objects Selected)</span>
      <span className="absolute -bottom-[3px] left-[63px] h-[3px] w-[376px] bg-[#00aeef]" />
      <button className="ml-auto flex items-center gap-[3px]">
        <svg width="20" height="24" viewBox="0 0 20 24"><path d="M1 8h17v10h-9l-5 5v-5H1z" fill="#dfe6f2" /><circle cx="11" cy="8" r="7" fill="#1c3f9e" /><path d="M11 4v2M11 8v5" stroke="#fff" strokeWidth="2.500" /></svg>
        2 Messages
      </button>
      <span className="ml-[24px]">No Selection</span>
      <button className="ml-[29px] flex items-center gap-[7px]">
        <svg width="11" height="8"><path d="M0 7h11L5.500 0z" fill="#8ff0e0" /></svg>
        Metric (mm, kg, N, s, mV, mA)
      </button>
      <span className="ml-[17px]">Degrees</span>
      <span className="ml-[16px]">rad/s</span>
      <span className="ml-[16px]">Celsius</span>
    </footer>
  );
}

export default function App() {
  return (
    <div className="h-screen min-h-[900px] bg-white pb-[21px] pl-[19px] pr-[26px] pt-[28px] font-[Open_Sans,Noto_Sans,sans-serif] text-[14px]">
      <div className="flex h-full flex-col">
        <TitleBar />
        <TabBar />
        <Ribbon />
        <main className="flex min-h-0 flex-1 bg-[#f4f4f6]">
          <aside className="mr-[6px] flex w-[475px] shrink-0 flex-col">
            <OutlinePanel />
            <div className="h-[9px] shrink-0 bg-[#efeff0]" />
            <DetailsPanel />
          </aside>
          <div className="flex min-w-0 flex-1 flex-col">
            <GraphicsToolbar />
            <Viewport />
          </div>
        </main>
        <StatusBar />
      </div>
    </div>
  );
}
